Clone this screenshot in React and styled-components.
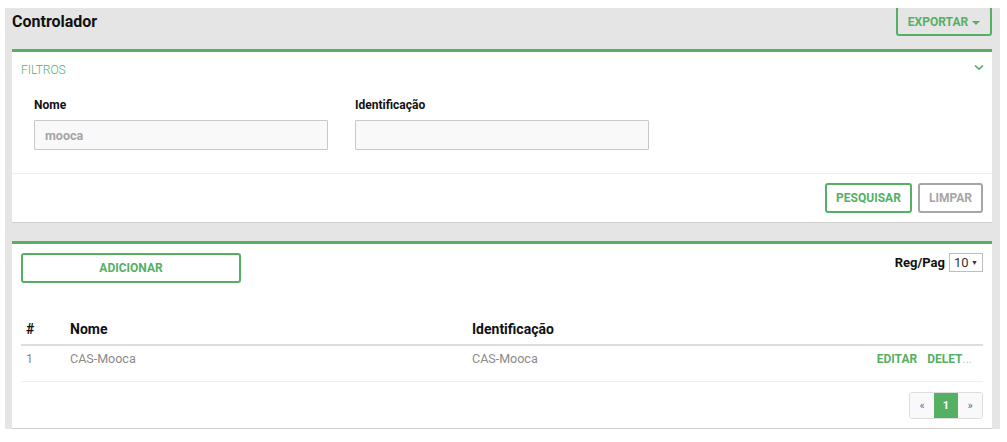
import React from "react";
import styled, { createGlobalStyle } from "styled-components";

const green = "#55b064";

const GlobalStyle = createGlobalStyle`
  html, body {
    margin: 0;
    background: #fff;
    font-family: Roboto, "Liberation Sans", Arial, sans-serif;
  }
  * { box-sizing: border-box; }
`;

function Chevron() {
  return (
    <svg width="10" height="7" viewBox="0 0 10 7">
      <path d="M1 1.5 L5 5.2 L9 1.5" fill="none" stroke={green} strokeWidth="1.6" />
    </svg>
  );
}

function App() {
  return (
    <>
      <GlobalStyle />
      <Page>
        <Header>
          <Title>Controlador</Title>
          <ExportButton>
            EXPORTAR <Caret />
          </ExportButton>
        </Header>

        <Panel>
          <PanelHead>
            <PanelTitle>FILTROS</PanelTitle>
            <Chevron />
          </PanelHead>
          <FilterBody>
            <Field>
              <Label>Nome</Label>
              <Input defaultValue="mooca" />
            </Field>
            <Field>
              <Label>Identificação</Label>
              <Input defaultValue="" />
            </Field>
          </FilterBody>
          <FilterFooter>
            <OutlineButton>PESQUISAR</OutlineButton>
            <OutlineButton $muted>LIMPAR</OutlineButton>
          </FilterFooter>
        </Panel>

        <Panel $list>
          <ListTop>
            <AddButton>ADICIONAR</AddButton>
            <PerPage>
              Reg/Pag
              <SelectBox>
                10 <SmallCaret>▼</SmallCaret>
              </SelectBox>
            </PerPage>
          </ListTop>
          <Table>
            <thead>
              <tr>
                <Th $w="44px">#</Th>
                <Th $w="402px">Nome</Th>
                <Th>Identificação</Th>
                <Th />
              </tr>
            </thead>
            <tbody>
              <tr>
                <Td>1</Td>
                <Td>CAS-Mooca</Td>
                <Td>CAS-Mooca</Td>
                <ActionsTd>
                  <ActionLink>EDITAR</ActionLink>
                  <ActionLink>
                    DELET<Dots>...</Dots>
                  </ActionLink>
                </ActionsTd>
              </tr>
            </tbody>
          </Table>
          <Pager>
            <PageGroup>
              <PageItem>«</PageItem>
              <PageItem $active>1</PageItem>
              <PageItem>»</PageItem>
            </PageGroup>
          </Pager>
        </Panel>
      </Page>
    </>
  );
}

const Page = styled.div`
  margin: 8px 7px 0 5px;
  background: #e5e5e5;
  padding: 0 8px 1px 7px;
`;

const Header = styled.div`
  display: flex;
  justify-content: space-between;
  align-items: flex-start;
  height: 41px;
  overflow: hidden;
`;

const Title = styled.h1`
  margin: 5px 0 0 0;
  font-size: 16px;
  font-weight: 700;
  color: #111;
  line-height: 18px;
`;

const ExportButton = styled.button`
  margin-top: -2px;
  width: 96px;
  height: 30px;
  background: transparent;
  border: 2px solid ${green};
  border-radius: 3px;
  color: ${green};
  font-family: inherit;
  font-weight: 700;
  font-size: 12px;
  display: flex;
  align-items: center;
  justify-content: center;
  gap: 4px;
  padding: 2px 0 0 0;
`;

const Caret = styled.span`
  display: inline-block;
  width: 0;
  height: 0;
  border-left: 4px solid transparent;
  border-right: 4px solid transparent;
  border-top: 4px solid ${green};
  margin-top: 1px;
`;

const Panel = styled.div`
  background: #fff;
  border-top: 3px solid ${green};
  box-shadow: 0 1px 0 #cfcfcf;
  margin-top: ${(p) => (p.$list ? "19px" : "0")};
`;

const PanelHead = styled.div`
  display: flex;
  justify-content: space-between;
  align-items: flex-start;
  height: 36px;
  padding: 11px 9px 0 9px;
  svg {
    margin-top: 1px;
    margin-right: -1px;
  }
`;

const PanelTitle = styled.div`
  color: ${green};
  font-size: 12px;
  font-weight: 300;
  line-height: 14px;
`;

const FilterBody = styled.div`
  display: flex;
  gap: 27px;
  padding: 9px 22px 23px 22px;
  border-bottom: 1px solid #efefef;
`;

const Field = styled.div`
  display: flex;
  flex-direction: column;
  width: 294px;
`;

const Label = styled.label`
  font-size: 12px;
  font-weight: 700;
  color: #111;
  line-height: 16px;
  margin-bottom: 7px;
`;

const Input = styled.input`
  height: 30px;
  background: #f9f9f9;
  border: 1px solid #c8c8c8;
  border-radius: 1px;
  padding: 0 10px;
  font-family: inherit;
  font-size: 12.5px;
  font-weight: 700;
  color: #a5a5a5;
  outline: none;
`;

const FilterFooter = styled.div`
  display: flex;
  justify-content: flex-end;
  gap: 6px;
  padding: 9px 9px 9px 0;
`;

const OutlineButton = styled.button`
  height: 30px;
  padding: 0 9px;
  background: #fff;
  border: 2px solid ${(p) => (p.$muted ? "#a6a6a6" : green)};
  border-radius: 3px;
  color: ${(p) => (p.$muted ? "#a6a6a6" : green)};
  font-family: inherit;
  font-size: 12px;
  font-weight: 700;
  min-width: ${(p) => (p.$muted ? "64px" : "87px")};
`;

const ListTop = styled.div`
  display: flex;
  justify-content: space-between;
  align-items: flex-start;
  padding: 9px 9px 0 9px;
  height: 67px;
`;

const AddButton = styled.button`
  width: 220px;
  height: 30px;
  background: #fff;
  border: 2px solid ${green};
  border-radius: 3px;
  color: ${green};
  font-family: inherit;
  font-size: 12px;
  font-weight: 700;
`;

const PerPage = styled.div`
  display: flex;
  align-items: center;
  gap: 4px;
  font-size: 13px;
  font-weight: 700;
  color: #111;
`;

const SelectBox = styled.div`
  width: 34px;
  height: 19px;
  border: 1px solid #bdbdbd;
  display: flex;
  align-items: center;
  justify-content: space-between;
  padding: 0 4px 0 4px;
  font-size: 13px;
  font-weight: 400;
  color: #333;
`;

const SmallCaret = styled.span`
  font-size: 7px;
  color: #333;
`;

const Table = styled.table`
  width: calc(100% - 18px);
  margin: 0 9px;
  border-collapse: collapse;
`;

const Th = styled.th`
  width: ${(p) => p.$w || "auto"};
  text-align: left;
  font-size: 14px;
  font-weight: 700;
  color: #111;
  padding: 0 5px 7px 5px;
  height: 34px;
  vertical-align: bottom;
  border-bottom: 2px solid #ddd;
`;

const Td = styled.td`
  font-size: 12.5px;
  line-height: 14px;
  color: #8a8a8a;
  padding: 6px 5px 0 5px;
  height: 36px;
  vertical-align: top;
  border-bottom: 1px solid #efefef;
`;

const ActionsTd = styled(Td)`
  text-align: right;
  padding-right: 11px;
  white-space: nowrap;
`;

const ActionLink = styled.span`
  color: ${green};
  font-size: 12px;
  font-weight: 700;
  margin-left: 10px;
`;

const Dots = styled.span`
  color: #a9d6b0;
  font-weight: 400;
`;

const Pager = styled.div`
  display: flex;
  justify-content: flex-end;
  padding: 10px 9px 9px 0;
`;

const PageGroup = styled.div`
  display: flex;
  border: 1px solid #ddd;
  border-radius: 3px;
  overflow: hidden;
`;

const PageItem = styled.div`
  width: ${(p) => (p.$active ? "24px" : "24px")};
  height: 25px;
  display: flex;
  align-items: center;
  justify-content: center;
  font-size: 11px;
  font-weight: ${(p) => (p.$active ? 700 : 400)};
  background: ${(p) => (p.$active ? green : "#f9f9f9")};
  color: ${(p) => (p.$active ? "#fff" : "#337ab7")};
`;

export default App;
